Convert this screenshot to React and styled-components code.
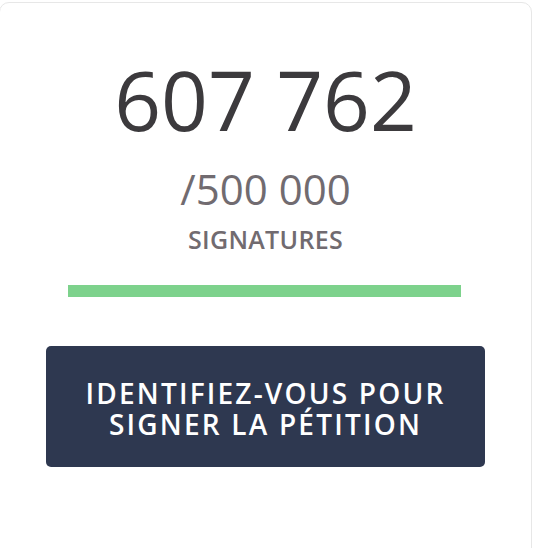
import styled, { createGlobalStyle } from 'styled-components';

const GlobalStyle = createGlobalStyle`
  body {
    margin: 0;
    background: #fff;
    font-family: "Open Sans", "Liberation Sans", sans-serif;
  }
`;

const App = () => {
  return (
    <>
      <GlobalStyle />
      <Card>
        <Counter>
          <Count>607 762</Count>
          <Goal>/500 000</Goal>
          <Label>Signatures</Label>
        </Counter>
        <Progress>
          <ProgressFill style={{ width: `${Math.min(607762 / 500000, 1) * 100}%` }} />
        </Progress>
        <SignButton>
          Identifiez-vous pour
          <br />
          signer la pétition
        </SignButton>
      </Card>
    </>
  );
};

const Card = styled.div`
  box-sizing: border-box;
  width: 533px;
  min-height: 560px;
  margin: 2px 0 0 -1px;
  padding: 46px 46px 0;
  border: 1px solid #e7e7e7;
  border-radius: 10px;
  background: #fff;
`;

const Counter = styled.div`
  display: flex;
  flex-direction: column;
  align-items: center;
  text-align: center;
`;

const Count = styled.div`
  font-size: 82px;
  line-height: 100px;
  font-weight: 400;
  color: #3c3a3d;
`;

const Goal = styled.div`
  margin-top: 15px;
  font-size: 42px;
  line-height: 50px;
  font-weight: 400;
  color: #716b70;
`;

const Label = styled.div`
  margin-top: 10px;
  font-size: 25px;
  line-height: 30px;
  font-weight: 600;
  text-transform: uppercase;
  color: #716b70;
  letter-spacing: 0.3px;
`;

const Progress = styled.div`
  height: 12px;
  margin: 31px 24px 0 22px;
  background: #e9ecef;
`;

const ProgressFill = styled.div`
  height: 100%;
  background: #7dd28c;
`;

const SignButton = styled.button`
  display: block;
  box-sizing: border-box;
  width: 100%;
  height: 121px;
  margin-top: 49px;
  padding: 4px 20px 0;
  border: none;
  border-radius: 5px;
  background: #2e3850;
  color: #fff;
  font-family: inherit;
  font-size: 28px;
  line-height: 31px;
  font-weight: 600;
  letter-spacing: 2.2px;
  text-transform: uppercase;
`;

export default App;
